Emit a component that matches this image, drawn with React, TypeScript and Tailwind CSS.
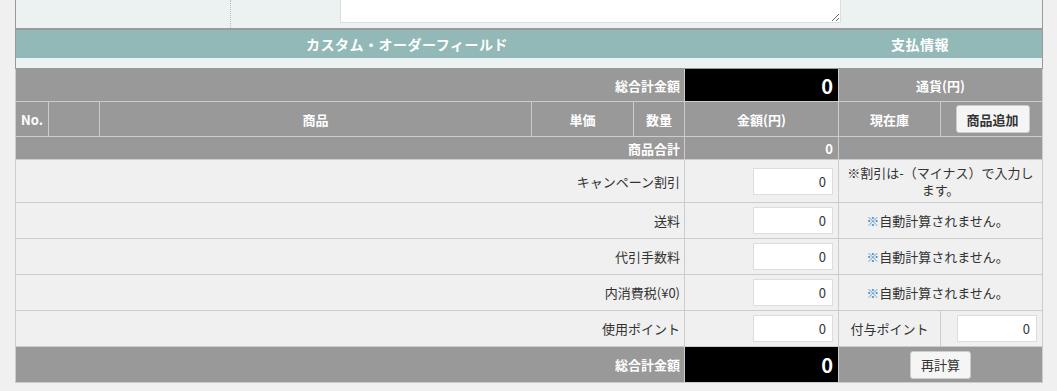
import React from 'react';

const gray = 'bg-[#999] text-white font-bold text-[13px] flex items-center';
const light = 'bg-[#f0f0f0] text-[#333] text-[13px] flex items-center';

function NumInput({ value = '0' }: { value?: string }) {
  return (
    <input
      readOnly
      value={value}
      className="w-[80px] h-[27px] border border-[#ddd] bg-white text-right pr-[6px] text-[13px] text-[#333] outline-none"
    />
  );
}

function Note() {
  return (
    <span>
      <span className="text-[#3d8fce]">※</span>自動計算されません。
    </span>
  );
}

export default function App() {
  const feeRows = [
    { label: '送料' },
    { label: '代引手数料' },
    { label: '内消費税(¥0)' },
  ];

  return (
    <div className="min-h-screen bg-[#f0f0f0] font-['Noto_Sans_CJK_JP',sans-serif] leading-[17px]">
      <div className="ml-[15px] w-[1028px]">
        {/* Custom field / payment header */}
        <div className="border-x border-[#999] bg-[#ecf1f1]">
          <div className="flex h-[28px] items-end">
            <div className="w-[215px] h-full border-r border-dotted border-[#bbb]" />
            <textarea
              readOnly
              className="ml-[109px] mb-[5px] w-[501px] h-[50px] shrink-0 border border-[#ddd] bg-white"
            />
          </div>
          <div className="h-[2px] bg-[#9e9a9a]" />
          <div className="flex h-[28px] bg-[#92b9b7] text-white font-bold text-[14px] tracking-[0.5px]">
            <div className="w-[782px] flex items-center justify-center">カスタム・オーダーフィールド</div>
            <div className="flex-1 flex items-center justify-center">支払情報</div>
          </div>
          <div className="h-[10px]" />
        </div>
        <div className="h-px bg-[#999]" />

        {/* Order table */}
        <div className="grid grid-cols-[32px_50px_431px_101px_50px_153px_101px_101px] grid-rows-[32px_34px_22px_42px_35px_35px_35px_35px_35px] gap-px bg-[#ccc] border-x border-b border-[#ccc]">
          {/* total */}
          <div className={`${gray} col-span-5 justify-end pr-[4px]`}>総合計金額</div>
          <div className="bg-black text-white font-bold text-[20px] flex items-center justify-end pr-[5px]">0</div>
          <div className={`${gray} col-span-2 justify-center`}>通貨(円)</div>

          {/* header */}
          <div className={`${gray} justify-center`}>No.</div>
          <div className={gray} />
          <div className={`${gray} justify-center`}>商品</div>
          <div className={`${gray} justify-center`}>単価</div>
          <div className={`${gray} justify-center`}>数量</div>
          <div className={`${gray} justify-center`}>金額(円)</div>
          <div className={`${gray} justify-center`}>現在庫</div>
          <div className={`${gray} justify-center`}>
            <button className="w-[74px] h-[28px] ml-[2px] rounded-[3px] border border-[#ccc] bg-[#f5f5f5] text-[#333] font-bold text-[13px]">
              商品追加
            </button>
          </div>

          {/* subtotal */}
          <div className={`${gray} col-span-5 justify-end pr-[4px]`}>商品合計</div>
          <div className={`${gray} justify-end pr-[5px]`}>0</div>
          <div className={`${gray} col-span-2`} />

          {/* campaign */}
          <div className={`${light} col-span-5 justify-end pr-[4px]`}>キャンペーン割引</div>
          <div className={`${light} justify-end pr-[5px]`}>
            <NumInput />
          </div>
          <div className={`${light} col-span-2 justify-center text-center whitespace-nowrap`}>
            ※割引は-（マイナス）で入力し
            <br />
            ます。
          </div>

          {feeRows.map((r) => (
            <React.Fragment key={r.label}>
              <div className={`${light} col-span-5 justify-end pr-[4px]`}>{r.label}</div>
              <div className={`${light} justify-end pr-[5px]`}>
                <NumInput />
              </div>
              <div className={`${light} col-span-2 justify-center pr-[6px]`}>
                <Note />
              </div>
            </React.Fragment>
          ))}

          {/* points */}
          <div className={`${light} col-span-5 justify-end pr-[4px]`}>使用ポイント</div>
          <div className={`${light} justify-end pr-[5px]`}>
            <NumInput />
          </div>
          <div className={`${light} justify-center`}>付与ポイント</div>
          <div className={`${light} justify-end pr-[5px]`}>
            <NumInput />
          </div>

          {/* grand total */}
          <div className={`${gray} col-span-5 justify-end pr-[4px]`}>総合計金額</div>
          <div className="bg-black text-white font-bold text-[20px] flex items-center justify-end pr-[5px]">0</div>
          <div className={`${gray} col-span-2 justify-center`}>
            <button className="w-[61px] h-[28px] rounded-[3px] border border-[#ccc] bg-[#f5f5f5] text-[#333] font-normal text-[13px]">
              再計算
            </button>
          </div>
        </div>
      </div>
    </div>
  );
}
